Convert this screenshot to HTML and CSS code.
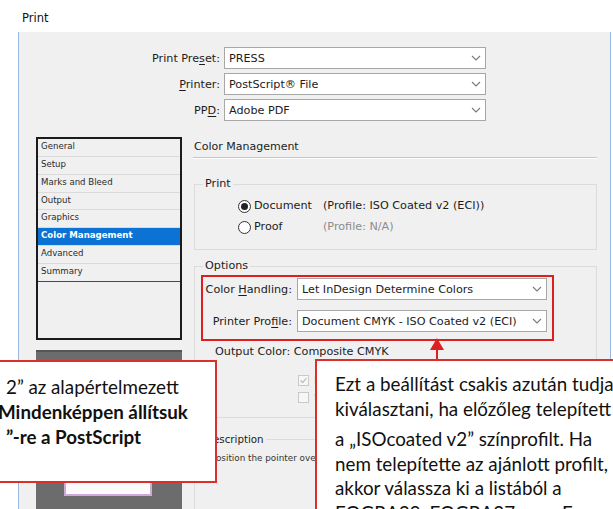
FILE: index.html
```html
<!DOCTYPE html>
<html lang="hu">
<head>
<meta charset="utf-8">
<title>Print</title>
<link rel="stylesheet" href="styles.css">
</head>
<body>
<div class="page">
  <div class="window">
    <div class="frame-top"></div>
    <div class="titlebar">Print</div>
    <div class="client">
      <div class="preset-grid">
        <span class="field-label">Print Pre<u>s</u>et:</span>
        <div class="select"><span>PRESS</span><svg class="chev" viewBox="0 0 10 6"><path d="M1 1 L5 5 L9 1"/></svg></div>
        <span class="field-label"><u>P</u>rinter:</span>
        <div class="select"><span>PostScript® File</span><svg class="chev" viewBox="0 0 10 6"><path d="M1 1 L5 5 L9 1"/></svg></div>
        <span class="field-label">PP<u>D</u>:</span>
        <div class="select"><span>Adobe PDF</span><svg class="chev" viewBox="0 0 10 6"><path d="M1 1 L5 5 L9 1"/></svg></div>
      </div>

      <div class="main">
        <div class="side">
          <ul class="nav">
            <li>General</li>
            <li>Setup</li>
            <li>Marks and Bleed</li>
            <li>Output</li>
            <li>Graphics</li>
            <li class="sel">Color Management</li>
            <li>Advanced</li>
            <li class="last">Summary</li>
          </ul>
          <div class="preview"><div class="sheet"></div></div>
        </div>

        <div class="panel">
          <div class="panel-head">Color Management</div>

          <fieldset class="group group-print">
            <legend>Print</legend>
            <div class="radio-grid">
              <span class="radio-label"><span class="radio on"></span>Document</span>
              <span class="profile">(Profile: ISO Coated v2 (ECI))</span>
              <span class="radio-label"><span class="radio"></span>Proof</span>
              <span class="profile muted">(Profile: N/A)</span>
            </div>
          </fieldset>

          <fieldset class="group group-options">
            <legend>Options</legend>
            <div class="opt-grid">
              <span class="field-label">Color <u>H</u>andling:</span>
              <div class="select"><span>Let InDesign Determine Colors</span><svg class="chev" viewBox="0 0 10 6"><path d="M1 1 L5 5 L9 1"/></svg></div>
              <span class="field-label">Printer Pro<u>f</u>ile:</span>
              <div class="select"><span>Document CMYK - ISO Coated v2 (ECI)</span><svg class="chev" viewBox="0 0 10 6"><path d="M1 1 L5 5 L9 1"/></svg></div>
            </div>
            <div class="output-color">Output Color: Composite CMYK</div>
            <div class="checks">
              <span class="check-row"><span class="checkbox on"><svg viewBox="0 0 11 11"><path d="M2 5.5 L4.5 8 L9 2.5"/></svg></span>Preserve CMYK Numbers</span>
              <span class="check-row"><span class="checkbox"></span>Simulate Paper Color</span>
            </div>
          </fieldset>

          <fieldset class="group group-desc">
            <legend>Description</legend>
            <div class="desc-text">Position the pointer over a heading to view a description.</div>
          </fieldset>
        </div>
      </div>
    </div>
  </div>

  <div class="mark-box"></div>
  <div class="mark-arrow"></div>

  <div class="note note-left">
    <div class="nl-line">2” az alapértelmezett</div>
    <div class="nl-line strong pull">Mindenképpen állítsuk</div>
    <div class="nl-line strong">”-re a PostScript</div>
  </div>

  <div class="note note-right">
    <p>Ezt a beállítást csakis azután tudja<br>kiválasztani, ha előzőleg telepített</p>
    <p>a „ISOcoated v2” színprofilt. Ha<br>nem telepítette az ajánlott profilt,<br>akkor válassza ki a listából a<br>FOGRA39, FOGRA27 vagy E</p>
  </div>
</div>
</body>
</html>
```

FILE: styles.css
```css
* { box-sizing: border-box; }

html, body {
  margin: 0;
  padding: 0;
}

body {
  width: 613px;
  height: 509px;
  overflow: hidden;
  background: #fff;
  font-family: "DejaVu Sans", sans-serif;
  color: #1c1c1c;
}

.page {
  position: relative;
  width: 613px;
  height: 509px;
  overflow: hidden;
}

/* ---------- dialog window ---------- */
.window {
  margin: 5px 0 0 18px;
  width: 593px;
  height: 504px;
  display: flex;
  flex-direction: column;
}

.frame-top {
  height: 2px;
  background: linear-gradient(to right,
    #c9cdd4 0 74px, #3a3a3a 74px 75px, #c9cdd4 75px 115px,
    #244f8f 115px 352px, #7d8699 352px, #a99aa4 420px, #7f8ca8 489px,
    #244f8f 489px);
}

.titlebar {
  height: 27px;
  background: #fff;
  font-size: 11.5px;
  line-height: 27px;
  padding-left: 4px;
  color: #111;
}

.client {
  flex: 1;
  background: #f0f0f0;
  border-left: 1px solid #97b9e3;
  border-right: 1px solid #97b9e3;
  font-size: 11.2px;
}

.field-label {
  text-align: right;
  white-space: nowrap;
}

.field-label u { text-underline-offset: 2px; }

.preset-grid {
  display: grid;
  grid-template-columns: 201px 262px;
  column-gap: 4px;
  row-gap: 4px;
  padding-top: 15px;
  align-items: center;
}

.select {
  height: 22px;
  background: #fff;
  border: 1px solid #a7a7a7;
  display: flex;
  align-items: center;
  justify-content: space-between;
  padding: 0 4px 0 4px;
  white-space: nowrap;
}

.chev {
  width: 10px;
  height: 6px;
  fill: none;
  stroke: #7a7a7a;
  stroke-width: 1.1;
}

/* ---------- body: section list + panel ---------- */
.main {
  display: flex;
  margin-top: 16px;
}

.side {
  margin-left: 17px;
  width: 146px;
  flex: none;
}

.nav {
  list-style: none;
  margin: 0;
  padding: 0;
  height: 203px;
  border: 2px solid #1b1b1b;
  background: #f0f0f0;
}

.nav li {
  height: 17.85px;
  border-bottom: 1px solid #dadada;
  font-size: 8.6px;
  line-height: 15px;
  padding-left: 3px;
  color: #2a2a2a;
  white-space: nowrap;
}

.nav li.sel {
  background: #0c72d4;
  color: #fff;
  font-weight: bold;
}

.nav li.last { border-bottom-color: #4a4a4a; }

.preview {
  margin-top: 10px;
  height: 170px;
  background: #6c6c6c;
  border-top: 2px solid #555;
  padding: 23px 0 0 28px;
}

.sheet {
  width: 88px;
  height: 121px;
  background: #fbfbfb;
  border: 2px solid #cfa9da;
}

.panel {
  margin-left: 11px;
  width: 404px;
  flex: none;
}

.panel-head {
  height: 21px;
  font-size: 11px;
  line-height: 20px;
  padding-left: 1px;
  border-bottom: 1px solid #c6c6c6;
  box-shadow: 0 1px 0 #fff;
}

.group {
  margin: 0 0 0 1px;
  padding: 0;
  min-width: 0;
  border: 1px solid #dcdcdc;
}

.group legend {
  font-size: 11.2px;
  line-height: 14px;
  padding: 0 2px;
  margin-left: 8px;
}

.group-print { margin-top: 19px; }

.radio-grid {
  display: grid;
  grid-template-columns: 85px auto;
  row-gap: 3px;
  padding: 6px 0 13px 43px;
  align-items: center;
}

.radio-grid > span { height: 18px; line-height: 18px; }

.radio-label {
  display: flex;
  align-items: center;
  gap: 3px;
}

.radio {
  width: 13px;
  height: 13px;
  border: 1px solid #333;
  border-radius: 50%;
  background: #fff;
  display: flex;
  align-items: center;
  justify-content: center;
}

.radio.on::after {
  content: "";
  width: 7px;
  height: 7px;
  border-radius: 50%;
  background: #222;
}

.muted { color: #8c8c8c; }

.group-options { margin-top: 9px; }

.opt-grid {
  display: grid;
  grid-template-columns: 97px 250px;
  column-gap: 5px;
  row-gap: 10px;
  padding-top: 5px;
  align-items: center;
}

.output-color {
  margin-top: 12px;
  padding-left: 20px;
  line-height: 16px;
}

.checks {
  margin-top: 12px;
  padding: 0 0 12px 103px;
  display: flex;
  flex-direction: column;
  gap: 1px;
}

.check-row {
  height: 16px;
  display: flex;
  align-items: center;
  gap: 5px;
  color: #a0a0a0;
  white-space: nowrap;
}

.checkbox {
  width: 11px;
  height: 11px;
  border: 1px solid #c9c9c9;
  background: #f7f7f7;
}

.checkbox svg {
  display: block;
  width: 9px;
  height: 9px;
  fill: none;
  stroke: #b9b9b9;
  stroke-width: 1.4;
}

.group-desc {
  margin-top: 14px;
  height: 120px;
}

.group-desc legend { font-size: 10.3px; }

.desc-text {
  margin-top: 6px;
  padding-left: 16px;
  font-size: 8.8px;
  line-height: 12px;
  color: #333;
  white-space: nowrap;
}

/* ---------- annotations drawn over the dialog ---------- */
.mark-box {
  position: absolute;
  left: 201px;
  top: 275px;
  width: 353px;
  height: 66px;
  border: 2px solid #dc1f1f;
}

.mark-arrow {
  position: absolute;
  left: 430px;
  top: 338px;
  width: 14px;
  height: 22px;
}

.mark-arrow::before {
  content: "";
  position: absolute;
  left: 0;
  top: 0;
  border-left: 7px solid transparent;
  border-right: 7px solid transparent;
  border-bottom: 12px solid #dc1f1f;
}

.mark-arrow::after {
  content: "";
  position: absolute;
  left: 6px;
  top: 11px;
  width: 2px;
  height: 11px;
  background: #dc1f1f;
}

.note {
  position: absolute;
  background: #fff;
  border: 2px solid #d9302c;
  font-family: "Lato", "Open Sans", sans-serif;
  font-size: 18.8px;
  color: #111;
  white-space: nowrap;
}

.note-left {
  left: -12px;
  top: 360px;
  width: 229px;
  height: 123px;
  padding: 12px 0 0 16px;
  line-height: 25px;
}

.nl-line.strong { font-weight: bold; }
.nl-line.pull { margin-left: -8px; }

.note-right {
  left: 315px;
  top: 359px;
  width: 320px;
  height: 170px;
  padding: 11px 0 0 18px;
  line-height: 24.5px;
}

.note-right p { margin: 0; }
.note-right p + p { margin-top: 6px; }
```
